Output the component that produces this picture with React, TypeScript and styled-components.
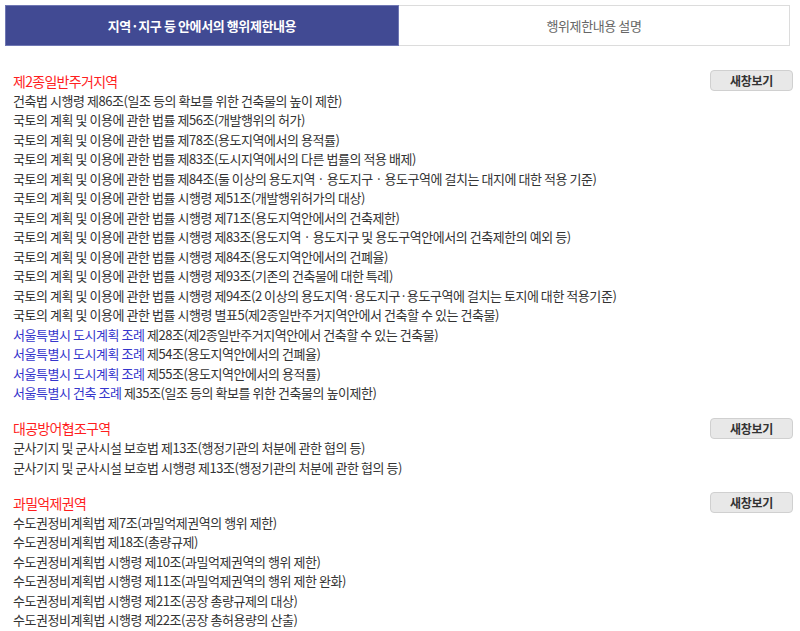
import React from 'react';
import styled, { createGlobalStyle } from 'styled-components';

const GlobalStyle = createGlobalStyle`
	body {
		margin: 0;
		background: #fff;
		font-family: 'Noto Sans CJK KR', 'Noto Sans', sans-serif;
	}
`;

type Part = { text: string; link?: boolean };
type Section = { title: string; items: Part[][] };

const sections: Section[] = [
	{
		title: '제2종일반주거지역',
		items: [
			[{ text: '건축법 시행령 제86조(일조 등의 확보를 위한 건축물의 높이 제한)' }],
			[{ text: '국토의 계획 및 이용에 관한 법률 제56조(개발행위의 허가)' }],
			[{ text: '국토의 계획 및 이용에 관한 법률 제78조(용도지역에서의 용적률)' }],
			[{ text: '국토의 계획 및 이용에 관한 법률 제83조(도시지역에서의 다른 법률의 적용 배제)' }],
			[{ text: '국토의 계획 및 이용에 관한 법률 제84조(둘 이상의 용도지역 · 용도지구 · 용도구역에 걸치는 대지에 대한 적용 기준)' }],
			[{ text: '국토의 계획 및 이용에 관한 법률 시행령 제51조(개발행위허가의 대상)' }],
			[{ text: '국토의 계획 및 이용에 관한 법률 시행령 제71조(용도지역안에서의 건축제한)' }],
			[{ text: '국토의 계획 및 이용에 관한 법률 시행령 제83조(용도지역 · 용도지구 및 용도구역안에서의 건축제한의 예외 등)' }],
			[{ text: '국토의 계획 및 이용에 관한 법률 시행령 제84조(용도지역안에서의 건폐율)' }],
			[{ text: '국토의 계획 및 이용에 관한 법률 시행령 제93조(기존의 건축물에 대한 특례)' }],
			[{ text: '국토의 계획 및 이용에 관한 법률 시행령 제94조(2 이상의 용도지역·용도지구·용도구역에 걸치는 토지에 대한 적용기준)' }],
			[{ text: '국토의 계획 및 이용에 관한 법률 시행령 별표5(제2종일반주거지역안에서 건축할 수 있는 건축물)' }],
			[{ text: '서울특별시 도시계획 조례', link: true }, { text: ' 제28조(제2종일반주거지역안에서 건축할 수 있는 건축물)' }],
			[{ text: '서울특별시 도시계획 조례', link: true }, { text: ' 제54조(용도지역안에서의 건폐율)' }],
			[{ text: '서울특별시 도시계획 조례', link: true }, { text: ' 제55조(용도지역안에서의 용적률)' }],
			[{ text: '서울특별시 건축 조례', link: true }, { text: ' 제35조(일조 등의 확보를 위한 건축물의 높이제한)' }],
		],
	},
	{
		title: '대공방어협조구역',
		items: [
			[{ text: '군사기지 및 군사시설 보호법 제13조(행정기관의 처분에 관한 협의 등)' }],
			[{ text: '군사기지 및 군사시설 보호법 시행령 제13조(행정기관의 처분에 관한 협의 등)' }],
		],
	},
	{
		title: '과밀억제권역',
		items: [
			[{ text: '수도권정비계획법 제7조(과밀억제권역의 행위 제한)' }],
			[{ text: '수도권정비계획법 제18조(총량규제)' }],
			[{ text: '수도권정비계획법 시행령 제10조(과밀억제권역의 행위 제한)' }],
			[{ text: '수도권정비계획법 시행령 제11조(과밀억제권역의 행위 제한 완화)' }],
			[{ text: '수도권정비계획법 시행령 제21조(공장 총량규제의 대상)' }],
			[{ text: '수도권정비계획법 시행령 제22조(공장 총허용량의 산출)' }],
		],
	},
];

export default function App() {
	return (
		<Page>
			<GlobalStyle />
			<Tabs>
				<Tab $active>지역·지구 등 안에서의 행위제한내용</Tab>
				<Tab>행위제한내용 설명</Tab>
			</Tabs>
			<Content>
				{sections.map((section) => (
					<Block key={section.title}>
						<TitleRow>
							<SectionTitle>{section.title}</SectionTitle>
							<OpenButton type="button">새창보기</OpenButton>
						</TitleRow>
						{section.items.map((parts, i) => (
							<Line key={i}>
								{parts.map((p, j) =>
									p.link ? <LawLink key={j}>{p.text}</LawLink> : <span key={j}>{p.text}</span>
								)}
							</Line>
						))}
					</Block>
				))}
			</Content>
		</Page>
	);
}

const Page = styled.div`
	padding: 5px 7px 0 5px;
`;

const Tabs = styled.div`
	display: grid;
	grid-template-columns: 394px 391px;
`;

const Tab = styled.div<{ $active?: boolean }>`
	height: 41px;
	box-sizing: border-box;
	display: flex;
	align-items: center;
	justify-content: center;
	font-size: 13px;
	letter-spacing: -0.4px;
	font-weight: ${(p) => (p.$active ? 700 : 400)};
	color: ${(p) => (p.$active ? '#fff' : '#666')};
	background: ${(p) => (p.$active ? '#414a93' : '#fff')};
	border: 1px solid ${(p) => (p.$active ? '#6f77b3' : '#dcdcdc')};
	border-left-width: ${(p) => (p.$active ? '1px' : '0')};
`;

const Content = styled.div`
	padding: 25px 0 0 8px;
`;

const Block = styled.div`
	margin-bottom: 16px;
`;

const TitleRow = styled.div`
	display: flex;
	align-items: center;
	justify-content: space-between;
	height: 19.5px;
`;

const SectionTitle = styled.div`
	color: #ff1e1e;
	font-size: 14px;
	letter-spacing: -0.7px;
`;

const OpenButton = styled.button`
	width: 83px;
	height: 21px;
	padding: 0;
	border: 1px solid #d0d0d0;
	border-radius: 4px;
	background: #e8e8e8;
	color: #333;
	font-family: inherit;
	font-size: 12px;
	font-weight: 700;
	letter-spacing: -0.3px;
`;

const Line = styled.div`
	color: #333;
	font-size: 13px;
	line-height: 19.5px;
	letter-spacing: -0.45px;
	white-space: nowrap;
`;

const LawLink = styled.span`
	color: #3535cc;
`;
